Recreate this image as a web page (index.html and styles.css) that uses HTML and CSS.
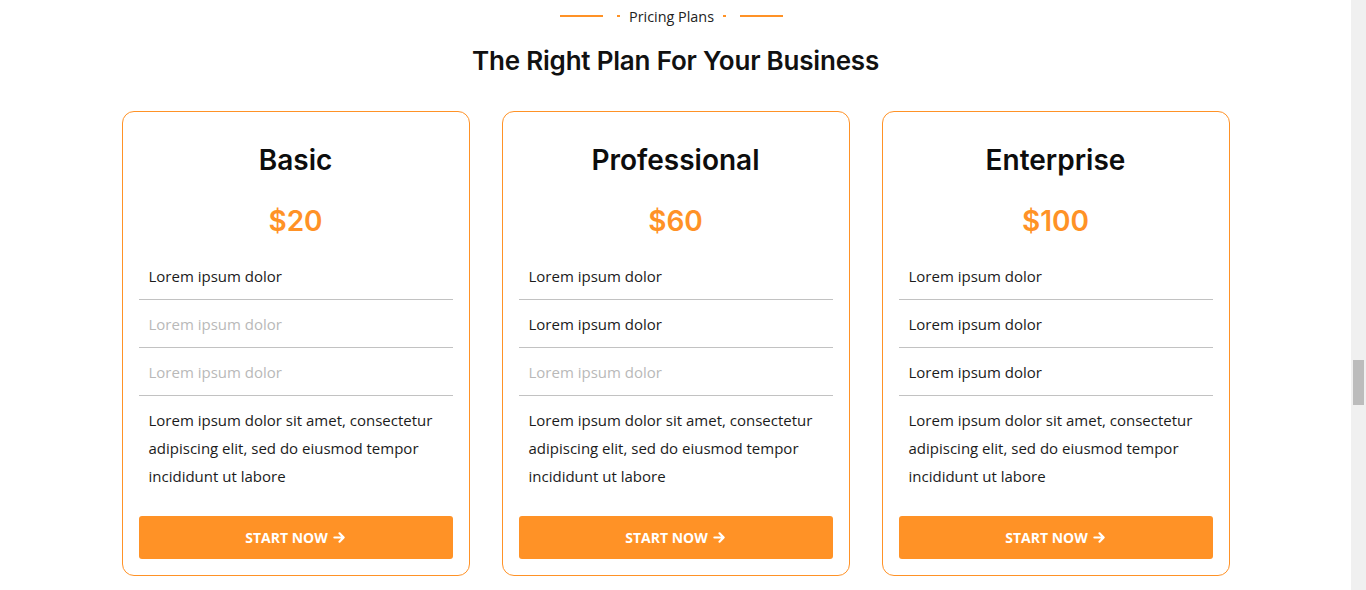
FILE: index.html
```html
<!DOCTYPE html>
<html lang="en">
<head>
<meta charset="utf-8">
<title>Pricing Plans</title>
<link rel="stylesheet" href="styles.css">
</head>
<body>
<main class="page">
  <section class="pricing">
    <div class="eyebrow">
      <span class="eyebrow-line"></span>
      <span class="eyebrow-dot"></span>
      <span class="eyebrow-text">Pricing Plans</span>
      <span class="eyebrow-dot"></span>
      <span class="eyebrow-line"></span>
    </div>
    <h2 class="section-title">The Right Plan For Your Business</h2>
    <div class="cards">
      <article class="card">
        <h3 class="card-title">Basic</h3>
        <div class="price">$20</div>
        <ul class="features">
          <li class="feature">Lorem ipsum dolor</li>
          <li class="feature muted">Lorem ipsum dolor</li>
          <li class="feature muted">Lorem ipsum dolor</li>
        </ul>
        <p class="desc">Lorem ipsum dolor sit amet, consectetur adipiscing elit, sed do eiusmod tempor incididunt ut labore</p>
        <a class="btn" href="#">START NOW <svg class="arrow" viewBox="0 0 14 14" width="13" height="13"><path d="M1.5 7H11.5M7 2.5L11.5 7L7 11.5" fill="none" stroke="#fff" stroke-width="2.4" stroke-linecap="round" stroke-linejoin="round"/></svg></a>
      </article>
      <article class="card">
        <h3 class="card-title">Professional</h3>
        <div class="price">$60</div>
        <ul class="features">
          <li class="feature">Lorem ipsum dolor</li>
          <li class="feature">Lorem ipsum dolor</li>
          <li class="feature muted">Lorem ipsum dolor</li>
        </ul>
        <p class="desc">Lorem ipsum dolor sit amet, consectetur adipiscing elit, sed do eiusmod tempor incididunt ut labore</p>
        <a class="btn" href="#">START NOW <svg class="arrow" viewBox="0 0 14 14" width="13" height="13"><path d="M1.5 7H11.5M7 2.5L11.5 7L7 11.5" fill="none" stroke="#fff" stroke-width="2.4" stroke-linecap="round" stroke-linejoin="round"/></svg></a>
      </article>
      <article class="card">
        <h3 class="card-title">Enterprise</h3>
        <div class="price">$100</div>
        <ul class="features">
          <li class="feature">Lorem ipsum dolor</li>
          <li class="feature">Lorem ipsum dolor</li>
          <li class="feature">Lorem ipsum dolor</li>
        </ul>
        <p class="desc">Lorem ipsum dolor sit amet, consectetur adipiscing elit, sed do eiusmod tempor incididunt ut labore</p>
        <a class="btn" href="#">START NOW <svg class="arrow" viewBox="0 0 14 14" width="13" height="13"><path d="M1.5 7H11.5M7 2.5L11.5 7L7 11.5" fill="none" stroke="#fff" stroke-width="2.4" stroke-linecap="round" stroke-linejoin="round"/></svg></a>
      </article>
    </div>
  </section>
</main>
<div class="scrollbar"><div class="scrollbar-thumb"></div></div>
</body>
</html>
```

FILE: styles.css
```css
* { box-sizing: border-box; }

html, body {
  margin: 0;
  padding: 0;
  background: #fff;
  overflow: hidden;
}

body {
  font-family: "Open Sans", "Noto Sans", sans-serif;
  color: #1b1b1b;
}

.page {
  width: calc(100% - 15px);
}

.pricing {
  display: flex;
  flex-direction: column;
  align-items: center;
  padding-top: 6px;
}

.eyebrow {
  display: flex;
  align-items: center;
  height: 20px;
  margin-right: 8px;
}

.eyebrow-line {
  width: 43px;
  height: 2px;
  background: #ff9226;
}

.eyebrow-dot {
  width: 3px;
  height: 2px;
  background: #ff9226;
  margin: 0 14px;
}

.eyebrow-text {
  font-size: 14.4px;
  color: #222;
  margin: 0 -5px;
}

.section-title {
  margin: 19px 0 0;
  font-family: "Inter", "Noto Sans", sans-serif;
  font-weight: 600;
  font-size: 26px;
  line-height: 32px;
  color: #111;
  letter-spacing: -0.2px;
}

.cards {
  display: flex;
  gap: 32px;
  margin-top: 34px;
}

.card {
  width: 348px;
  border: 1px solid #ff9226;
  border-radius: 12px;
  padding: 30px 16px 16px;
  display: flex;
  flex-direction: column;
}

.card-title {
  margin: 0;
  text-align: center;
  font-family: "Inter", "Noto Sans", sans-serif;
  font-weight: 600;
  font-size: 28px;
  line-height: 36px;
  color: #0d0d0d;
}

.price {
  margin-top: 25px;
  text-align: center;
  font-family: "Inter", "Noto Sans", sans-serif;
  font-weight: 600;
  font-size: 28px;
  line-height: 36px;
  color: #ff9226;
}

.features {
  list-style: none;
  margin: 13px 0 0;
  padding: 0;
}

.feature {
  padding: 10px 10px 9px;
  font-size: 15px;
  line-height: 28px;
  border-bottom: 1px solid #c2c2c2;
  color: #1b1b1b;
}

.feature.muted {
  color: #b9b9b9;
}

.desc {
  margin: 0;
  padding: 10px 10px 0;
  font-size: 15px;
  line-height: 28px;
  color: #1b1b1b;
}

.btn {
  margin-top: 26px;
  height: 43px;
  border-radius: 3px;
  background: #ff9226;
  color: #fff;
  text-decoration: none;
  font-weight: 700;
  font-size: 14px;
  display: flex;
  align-items: center;
  justify-content: center;
  gap: 5px;
}

.arrow {
  display: block;
}

.scrollbar {
  position: fixed;
  top: 0;
  right: 0;
  width: 15px;
  height: 100%;
  background: #f0f0f0;
}

.scrollbar-thumb {
  position: absolute;
  top: 360px;
  left: 2px;
  width: 11px;
  height: 45px;
  background: #bcbcbc;
}
```
